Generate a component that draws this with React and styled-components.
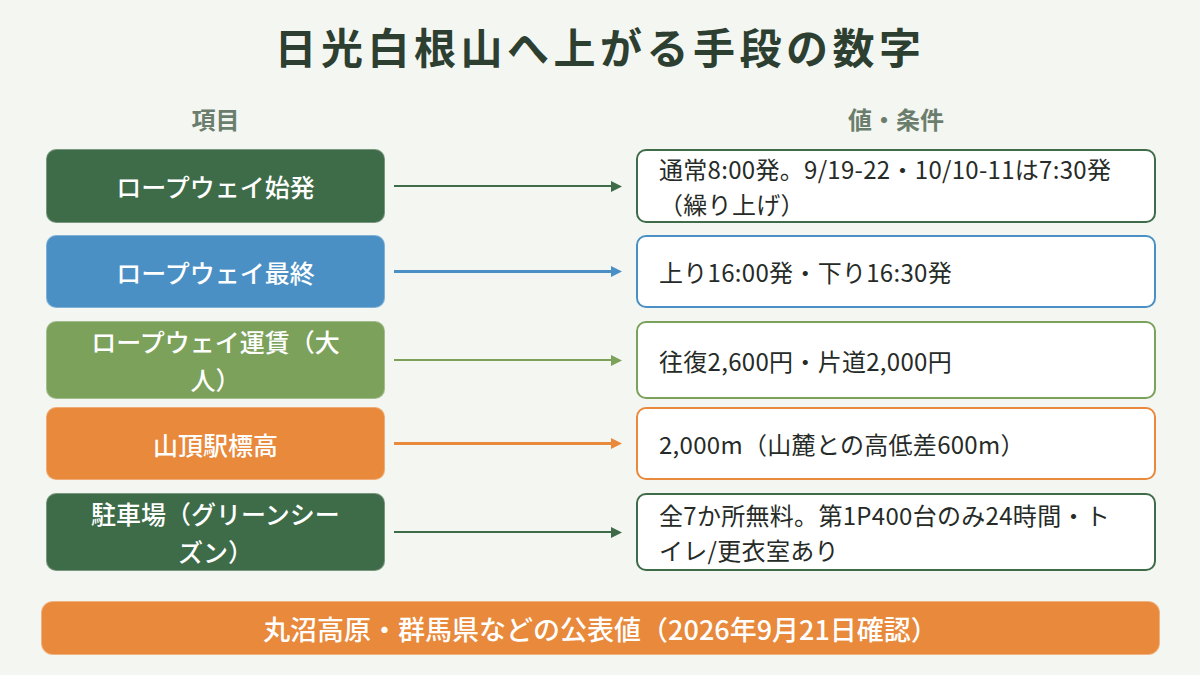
import React from 'react'
import styled, {createGlobalStyle} from 'styled-components'

const GlobalStyle = createGlobalStyle`
  html, body {
    margin: 0;
    padding: 0;
    background: #f4f6f1;
  }
  body {
    font-family: "Noto Sans CJK JP", "Noto Sans", sans-serif;
  }
`

const rows = [
  {
    label: 'ロープウェイ始発',
    value: ['通常8:00発。9/19-22・10/10-11は7:30発', '（繰り上げ）'],
    color: '#3e6b48',
  },
  {
    label: 'ロープウェイ最終',
    value: ['上り16:00発・下り16:30発'],
    color: '#4a90c5',
  },
  {
    label: 'ロープウェイ運賃（大人）',
    value: ['往復2,600円・片道2,000円'],
    color: '#7ca15b',
  },
  {
    label: '山頂駅標高',
    value: ['2,000m（山麓との高低差600m）'],
    color: '#e8893b',
  },
  {
    label: '駐車場（グリーンシーズン）',
    value: ['全7か所無料。第1P400台のみ24時間・ト', 'イレ/更衣室あり'],
    color: '#3e6b48',
  },
]

const App = () => {
  return (
    <Page>
      <GlobalStyle />
      <Title>日光白根山へ上がる手段の数字</Title>
      <Table>
        <HeaderRow>
          <ColumnHead>項目</ColumnHead>
          <span />
          <ColumnHead>値・条件</ColumnHead>
        </HeaderRow>
        {rows.map((row) => (
          <Row key={row.label}>
            <Label $color={row.color}>{row.label}</Label>
            <Arrow>
              <ArrowLine $color={row.color} />
              <svg width="11" height="11" viewBox="0 0 11 11">
                <polygon points="0,0 11,5.5 0,11" fill={row.color} />
              </svg>
            </Arrow>
            <Value $color={row.color}>
              <div>
                {row.value.map((line, i) => (
                  <ValueLine key={i}>{line}</ValueLine>
                ))}
              </div>
            </Value>
          </Row>
        ))}
      </Table>
      <Footer>丸沼高原・群馬県などの公表値（2026年9月21日確認）</Footer>
    </Page>
  )
}

const Page = styled.div`
  width: 1200px;
  height: 675px;
  box-sizing: border-box;
  display: flex;
  flex-direction: column;
  background: #f4f6f1;
  overflow: hidden;
`

const Title = styled.h1`
  margin: 0;
  height: 96px;
  line-height: 92px;
  text-align: center;
  font-size: 42px;
  font-weight: 600;
  letter-spacing: 4.5px;
  color: #2d3f31;
`

const Table = styled.div`
  display: flex;
  flex-direction: column;
  gap: 13px;
  padding-left: 46px;
`

const HeaderRow = styled.div`
  display: grid;
  grid-template-columns: 339px 251px 520px;
  height: 44px;
  align-items: center;
  margin-bottom: -4px;
`

const ColumnHead = styled.div`
  text-align: center;
  font-size: 24px;
  font-weight: 600;
  color: #6b7e6d;
`

const Row = styled.div`
  display: grid;
  grid-template-columns: 339px 251px 520px;
  height: 73px;
`

const Label = styled.div`
  display: flex;
  align-items: center;
  justify-content: center;
  box-sizing: border-box;
  padding: 0 38px;
  border-radius: 10px;
  border: 1px solid rgba(255, 255, 255, 0.3);
  background: ${(p) => p.$color};
  color: #ffffff;
  font-size: 25px;
  font-weight: 500;
  line-height: 38px;
  text-align: center;
`

const Arrow = styled.div`
  display: flex;
  align-items: center;
  padding: 0 14px 0 9px;
`

const ArrowLine = styled.div`
  flex: 1;
  height: 2.5px;
  background: ${(p) => p.$color};
`

const Value = styled.div`
  display: flex;
  align-items: center;
  box-sizing: border-box;
  padding: 0 20px 0 21px;
  border: 2.5px solid ${(p) => p.$color};
  border-radius: 10px;
  background: #ffffff;
  color: #262b27;
  font-size: 24px;
  letter-spacing: 0.3px;
  line-height: 35px;
`

const ValueLine = styled.div`
  white-space: nowrap;
`

const Footer = styled.div`
  margin: 35px 40px 0 41px;
  height: 52px;
  display: flex;
  align-items: center;
  justify-content: center;
  border-radius: 12px;
  border: 1px solid rgba(255, 255, 255, 0.35);
  background: #e8893b;
  color: #ffffff;
  font-size: 27px;
  font-weight: 500;
`

export default App
